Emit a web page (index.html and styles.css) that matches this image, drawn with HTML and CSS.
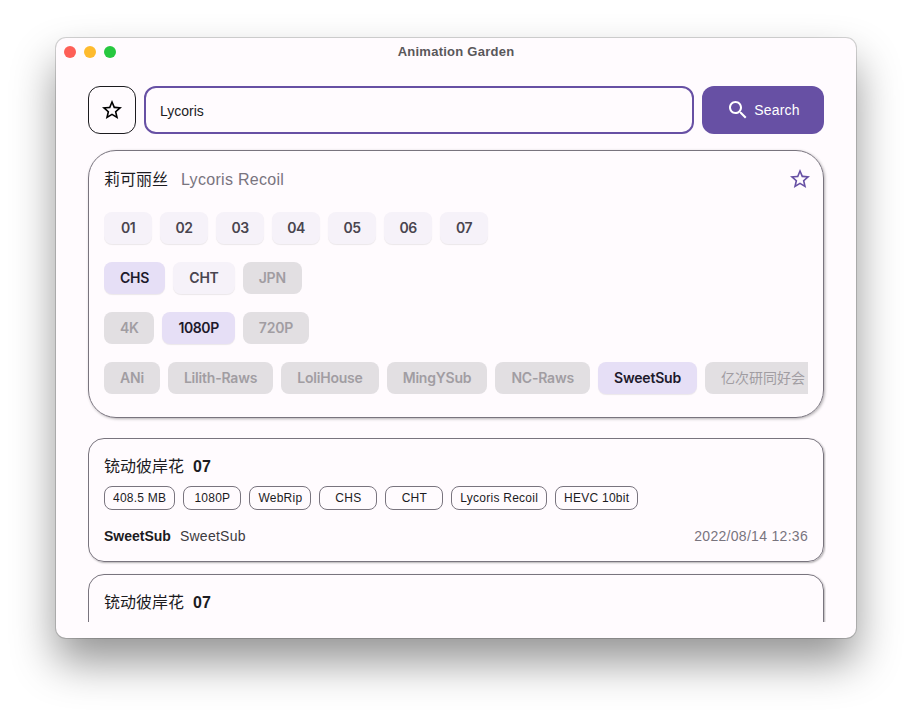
FILE: index.html
```html
<!doctype html>
<html lang="zh">
    <head>
        <meta charset="utf-8" />
        <title>Animation Garden</title>
        <link rel="stylesheet" href="styles.css">
    </head>
 <body>
    <div class="window">
        <div class="titlebar">
            <div class="lights">
                <span class="light red"></span>
                <span class="light yellow"></span>
                <span class="light green"></span>
            </div>
            <div class="wintitle">Animation Garden</div>
        </div>
        <div class="content">
            <!--search-->
            <div class="searchrow">
                <div class="starbtn">
                    <svg class="icon" viewBox="0 0 24 24"><path d="M22 9.24l-7.19-.62L12 2 9.19 8.63 2 9.24l5.46 4.73L5.82 21 12 17.27 18.18 21l-1.63-7.03L22 9.24zM12 15.4l-3.76 2.27 1-4.28-3.32-2.88 4.38-.38L12 6.1l1.71 4.04 4.38.38-3.32 2.88 1 4.28L12 15.4z"/></svg>
                </div>
                <div class="searchinput">Lycoris</div>
                <div class="searchbtn">
                    <svg class="icon" viewBox="0 0 24 24"><path d="M15.5 14h-.79l-.28-.27C15.41 12.59 16 11.11 16 9.5 16 5.91 13.09 3 9.5 3S3 5.91 3 9.5 5.91 16 9.5 16c1.61 0 3.09-.59 4.23-1.57l.27.28v.79l5 4.99L20.49 19l-4.99-5zm-6 0C7.01 14 5 11.99 5 9.5S7.01 5 9.5 5 14 7.01 14 9.5 11.99 14 9.5 14z"/></svg>
                    <span>Search</span>
                </div>
            </div>
            <!--filter-->
            <div class="filtercard">
                <div class="filterhead">
                    <span class="cn">莉可丽丝</span>
                    <span class="en">Lycoris Recoil</span>
                    <svg class="icon headstar" viewBox="0 0 24 24"><path d="M22 9.24l-7.19-.62L12 2 9.19 8.63 2 9.24l5.46 4.73L5.82 21 12 17.27 18.18 21l-1.63-7.03L22 9.24zM12 15.4l-3.76 2.27 1-4.28-3.32-2.88 4.38-.38L12 6.1l1.71 4.04 4.38.38-3.32 2.88 1 4.28L12 15.4z"/></svg>
                </div>
                <div class="chips">
                    <span class="chip num">01</span>
                    <span class="chip num">02</span>
                    <span class="chip num">03</span>
                    <span class="chip num">04</span>
                    <span class="chip num">05</span>
                    <span class="chip num">06</span>
                    <span class="chip num">07</span>
                </div>
                <div class="chips">
                    <span class="chip on">CHS</span>
                    <span class="chip">CHT</span>
                    <span class="chip off">JPN</span>
                </div>
                <div class="chips">
                    <span class="chip off tight">4K</span>
                    <span class="chip on tight">1080P</span>
                    <span class="chip off">720P</span>
                </div>
                <div class="chips">
                    <span class="chip off">ANi</span>
                    <span class="chip off">Lilith-Raws</span>
                    <span class="chip off">LoliHouse</span>
                    <span class="chip off">MingYSub</span>
                    <span class="chip off">NC-Raws</span>
                    <span class="chip on">SweetSub</span>
                    <span class="chip off cjk">亿次研同好会</span>
                </div>
            </div>
            <!--results-->
            <div class="results">
                <div class="result">
                    <div class="restitle">铳动彼岸花<b>07</b></div>
                    <div class="tags">
                        <span class="tag">408.5 MB</span>
                        <span class="tag">1080P</span>
                        <span class="tag">WebRip</span>
                        <span class="tag">CHS</span>
                        <span class="tag">CHT</span>
                        <span class="tag">Lycoris Recoil</span>
                        <span class="tag">HEVC 10bit</span>
                    </div>
                    <div class="resfoot">
                        <b>SweetSub</b>
                        <span class="uploader">SweetSub</span>
                        <span class="date">2022/08/14 12:36</span>
                    </div>
                </div>
                <div class="result">
                    <div class="restitle">铳动彼岸花<b>07</b></div>
                </div>
            </div>
        </div>
    </div>
 </body>
</html>
```

FILE: styles.css
```css
*{
    margin:0;
    padding:0;
    box-sizing:border-box;
}
html,body{
    height:100%;
    overflow:hidden;
    background:#fff;
}
body{
    padding:38px 56px 0;
    font-family:"Liberation Sans","Noto Sans CJK SC",sans-serif;
    color:#1c1b1f;
}
.window{
    width:800px;
    height:600px;
    background:#fffbfe;
    border-radius:10px;
    box-shadow:0 0 0 1px rgba(0,0,0,.16),0 24px 44px rgba(0,0,0,.42);
    display:flex;
    flex-direction:column;
}
.titlebar{
    height:27px;
    margin-bottom:1px;
    flex:none;
    display:flex;
    align-items:center;
    justify-content:center;
    position:relative;
}
.lights{
    position:absolute;
    left:8px;
    top:8px;
    display:flex;
    gap:8px;
}
.light{
    width:12px;
    height:12px;
    border-radius:50%;
}
.red{background:#fe5f57;}
.yellow{background:#febb2e;}
.green{background:#27c83f;}
.wintitle{
    font-size:13px;
    font-weight:bold;
    letter-spacing:.25px;
    color:#59575a;
}
.content{
    flex:1;
    min-height:0;
    padding:20px 32px 16px;
    display:flex;
    flex-direction:column;
}
.icon{
    width:24px;
    height:24px;
    display:block;
    fill:currentColor;
    flex:none;
}
.searchrow{
    display:flex;
    gap:8px;
    height:48px;
    flex:none;
}
.starbtn{
    width:48px;
    border:1px solid #1c1b1f;
    border-radius:12px;
    display:flex;
    align-items:center;
    justify-content:center;
    color:#000;
}
.searchinput{
    flex:1;
    border:2px solid #6750a4;
    border-radius:12px;
    padding-left:14px;
    font-size:14px;
    line-height:46px;
    color:#1c1b1f;
}
.searchbtn{
    width:122px;
    background:#6750a4;
    border-radius:12px;
    color:#fff;
    font-size:14px;
    letter-spacing:.15px;
    display:flex;
    align-items:center;
    justify-content:center;
    gap:4px;
}
.filtercard{
    margin-top:16px;
    height:268px;
    flex:none;
    border:1px solid #79747e;
    border-radius:28px;
    padding:15px 15px 0;
    box-shadow:1px 1px 3px rgba(0,0,0,.3);
}
.filterhead{
    height:26px;
    display:flex;
    align-items:baseline;
    font-size:16px;
    line-height:28px;
    margin-bottom:20px;
}
.filterhead .en{
    margin-left:13px;
    letter-spacing:.3px;
    color:#79747e;
}
.headstar{
    align-self:center;
    margin-left:auto;
    margin-right:-4px;
    color:#6750a4;
}
.chips{
    display:flex;
    gap:8px;
    height:34px;
    margin-bottom:16px;
    overflow:hidden;
}
.chip{
    flex:none;
    height:32px;
    padding:0 16px;
    border-radius:8px;
    font-family:Inter,"Noto Sans CJK SC",sans-serif;
    font-size:14px;
    font-weight:600;
    letter-spacing:-.2px;
    line-height:32px;
    text-align:center;
    color:#49454f;
    background:#f6f2f9;
    box-shadow:0 1px 1px rgba(0,0,0,.08);
}
.chip.num{
    width:48px;
    padding:0;
    letter-spacing:-.5px;
}
.chip.tight{
    letter-spacing:-.4px;
}
.chip.cjk{
    font-weight:400;
    letter-spacing:0;
}
.chip.on{
    background:#e6dff6;
    color:#1d192b;
}
.chip.off{
    background:#e2dfe2;
    color:#a19da2;
    box-shadow:none;
}
.results{
    margin-top:20px;
    flex:1;
    min-height:0;
    overflow:hidden;
    margin-right:-2px;
    padding-right:2px;
}
.result{
    height:124px;
    border:1px solid #79747e;
    border-radius:16px;
    padding:16px 15px 0;
    margin-bottom:12px;
    box-shadow:1px 1px 2px rgba(0,0,0,.3);
}
.restitle{
    font-size:16px;
    line-height:24px;
    color:#1c1b1f;
}
.restitle b{
    margin-left:9px;
    font-weight:bold;
}
.tags{
    display:flex;
    gap:8px;
    margin-top:7px;
}
.tag{
    min-width:58px;
    height:24px;
    padding:0 8px;
    border:1px solid #79747e;
    border-radius:8px;
    font-size:12px;
    letter-spacing:.25px;
    line-height:22px;
    text-align:center;
    color:#1c1b1f;
}
.resfoot{
    display:flex;
    align-items:center;
    font-size:14px;
    margin-top:16px;
    line-height:20px;
}
.uploader{
    margin-left:9px;
    letter-spacing:.25px;
    color:#3c3a40;
}
.date{
    margin-left:auto;
    letter-spacing:.3px;
    color:#79747e;
}
```
